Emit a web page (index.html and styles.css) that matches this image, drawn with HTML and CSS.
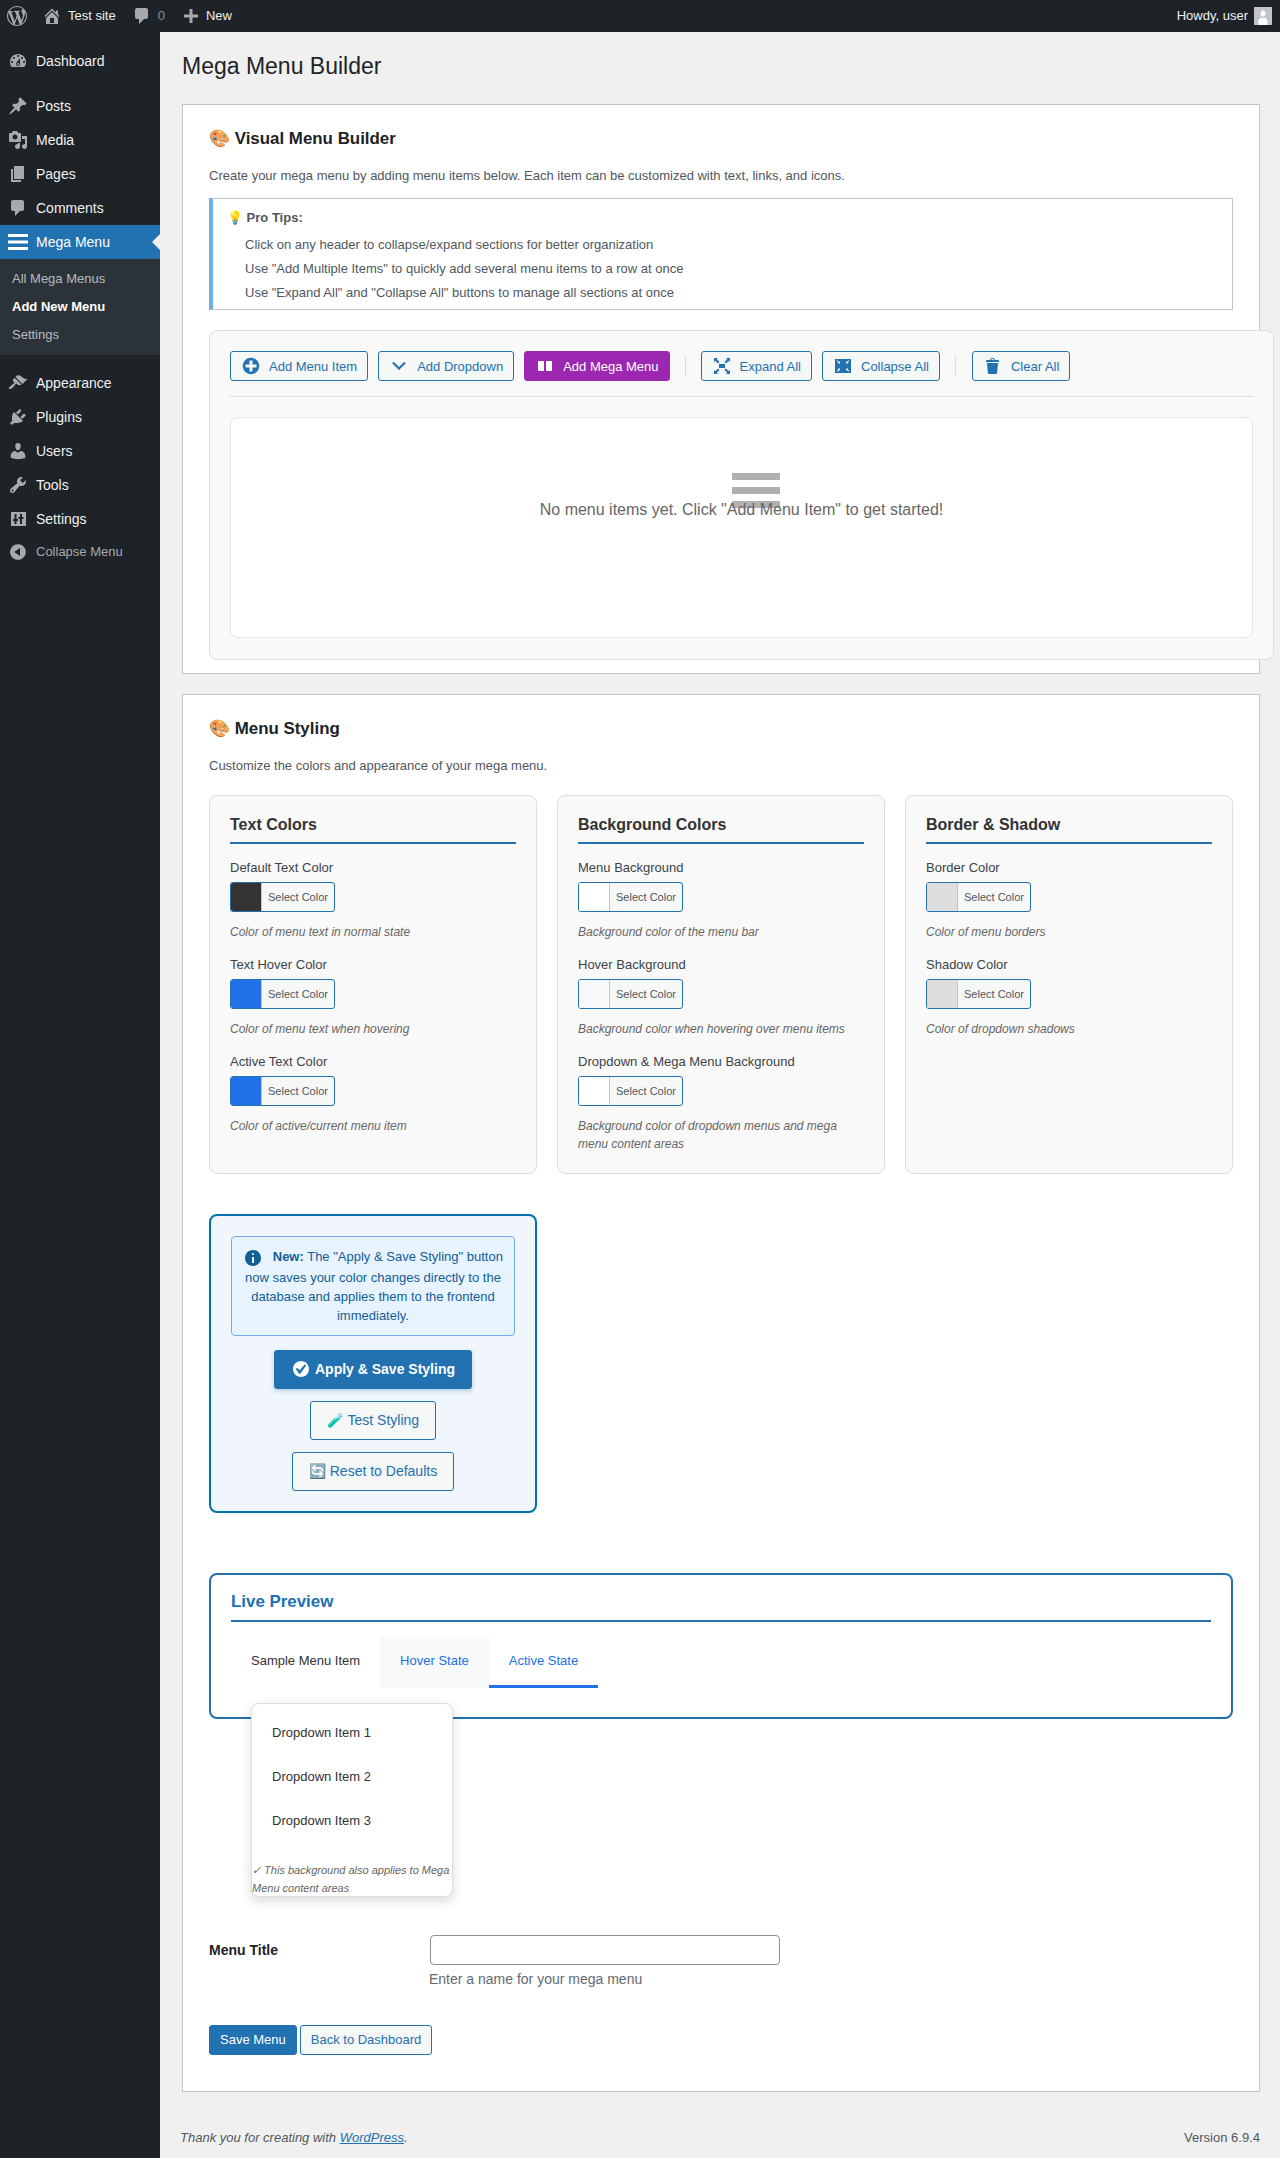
FILE: index.html
```html
<!DOCTYPE html>
<html lang="en">
<head>
    <meta charset="UTF-8">
    <meta name="viewport" content="width=device-width, initial-scale=1.0">
    <title>Mega Menu Builder</title>
    <link rel="stylesheet" href="styles.css">
</head>
<body>
    <div class="adminbar">
        <div class="adminbar-left">
            <svg class="ab-logo" viewBox="0 0 20 20"><path d="M20 10c0-5.51-4.49-10-10-10C4.48 0 0 4.49 0 10c0 5.52 4.48 10 10 10 5.51 0 10-4.48 10-10zM7.78 15.37L4.37 6.22c.55-.02 1.17-.08 1.17-.08.5-.06.44-1.13-.06-1.11 0 0-1.45.11-2.37.11-.18 0-.37 0-.58-.01C4.12 2.69 6.87 1.11 10 1.11c2.33 0 4.45.87 6.05 2.34-.68-.11-1.65.39-1.65 1.58 0 .74.45 1.36.9 2.1.35.61.55 1.36.55 2.46 0 1.49-1.4 5-1.4 5l-3.03-8.37c.54-.02.82-.17.82-.17.5-.05.44-1.25-.06-1.22 0 0-1.44.12-2.38.12-.87 0-2.33-.12-2.33-.12-.5-.03-.56 1.2-.06 1.22l.92.08 1.26 3.41zM17.41 10c.24-.64.74-1.87.43-4.25.7 1.29 1.05 2.71 1.05 4.25 0 3.29-1.73 6.24-4.4 7.78.97-2.59 1.94-5.2 2.92-7.78zM6.1 18.09C3.12 16.65 1.11 13.53 1.11 10c0-1.3.23-2.48.72-3.59C3.25 10.3 4.67 14.2 6.1 18.09zm4.03-6.63l2.58 6.98c-.86.29-1.76.45-2.71.45-.79 0-1.57-.11-2.29-.33.81-2.38 1.62-4.74 2.42-7.1z"/></svg>
            <span class="ab-item">
                <svg class="ab-icon" viewBox="0 0 20 20"><path d="M16 8.5l1.53 1.53-1.06 1.06L10 4.62l-6.47 6.47-1.06-1.06L10 2.5l4 4v-2h2v4zm-6-2.46l6 5.99V18H4v-5.97zM12 17v-5H8v5h4z"/></svg>
                Test site
            </span>
            <span class="ab-item">
                <svg class="ab-icon" viewBox="0 0 20 20"><path d="M5 2h9c1.1 0 2 .9 2 2v7c0 1.1-.9 2-2 2h-2l-5 5v-5H5c-1.1 0-2-.9-2-2V4c0-1.1.9-2 2-2z"/></svg>
                <span class="ab-count">0</span>
            </span>
            <span class="ab-item ab-new">
                <svg class="ab-icon" viewBox="0 0 20 20"><path d="M17 8.5v3h-5.5V17h-3v-5.5H3v-3h5.5V3h3v5.5z"/></svg>
                New
            </span>
        </div>
        <div class="adminbar-right">
            Howdy, user
            <svg class="ab-avatar" viewBox="0 0 18 18"><rect width="18" height="18" fill="#c3c4c7"/><path fill="#fff" d="M9 3.5c1.7 0 2.6 1.5 2.4 3.2-.2 1.6-1 3-2.4 3s-2.2-1.4-2.4-3C6.400 5 7.300 3.500 9 3.500zM4.500 18v-3.500c0-2 1.500-3.500 2.800-4L9 11.500l1.700-1c1.300.5 2.800 2 2.800 4V18z"/></svg>
        </div>
    </div>

    <div class="shell">
        <nav class="sidebar">
            <ul class="menu">
                <li class="menu-item"><svg class="menu-icon" viewBox="0 0 20 20"><path d="M3.760 16h12.480c1.100-1.370 1.760-3.110 1.760-5 0-4.420-3.580-8-8-8s-8 3.580-8 8c0 1.890.660 3.630 1.760 5zM10 4c.55 0 1 .45 1 1s-.45 1-1 1-1-.45-1-1 .45-1 1-1zM6 6c.55 0 1 .45 1 1s-.45 1-1 1-1-.45-1-1 .45-1 1-1zm8 0c.55 0 1 .45 1 1s-.45 1-1 1-1-.45-1-1 .45-1 1-1zm-5.370 5.550L12 7v6c0 1.100-.9 2-2 2s-2-.9-2-2c0-.570.240-1.080.630-1.450zM4 10c.55 0 1 .45 1 1s-.45 1-1 1-1-.45-1-1 .45-1 1-1zm12 0c.55 0 1 .45 1 1s-.45 1-1 1-1-.45-1-1 .45-1 1-1zm-5 3c0-.55-.45-1-1-1s-1 .45-1 1 .45 1 1 1 1-.45 1-1z"/></svg>Dashboard</li>
                <li class="menu-sep"></li>
                <li class="menu-item"><svg class="menu-icon" viewBox="0 0 20 20"><path d="M10.440 3.020l1.820-1.820 6.360 6.350-1.830 1.820c-1.050-.68-2.480-.57-3.410.36l-.75.75c-.92.93-1.040 2.350-.35 3.410l-1.830 1.820-2.410-2.410-2.800 2.790c-.42.42-3.380 2.710-3.800 2.290s1.860-3.390 2.280-3.810l2.790-2.790L4.100 9.360l1.830-1.820c1.050.69 2.480.57 3.400-.36l.75-.75c.93-.92 1.050-2.350.36-3.410z"/></svg>Posts</li>
                <li class="menu-item"><svg class="menu-icon" viewBox="0 0 20 20"><path d="M13 11V4c0-.55-.45-1-1-1h-1.670L9 1H5L3.670 3H2c-.55 0-1 .45-1 1v7c0 .55.45 1 1 1h10c.55 0 1-.45 1-1zM7 4.500c1.380 0 2.500 1.120 2.500 2.500S8.380 9.500 7 9.500 4.500 8.380 4.500 7 5.620 4.500 7 4.500zM14 6h5v10.500c0 1.380-1.120 2.500-2.500 2.500S14 17.880 14 16.500s1.120-2.500 2.500-2.500c.17 0 .34.02.5.05V9h-3V6zm-4 8.050V13h2v3.500c0 1.380-1.120 2.500-2.500 2.500S7 17.880 7 16.500 8.120 14 9.500 14c.17 0 .34.02.5.05z"/></svg>Media</li>
                <li class="menu-item"><svg class="menu-icon" viewBox="0 0 20 20"><path d="M6 15V2h10v13H6zm-1 1h8v2H3V5h2v11z"/></svg>Pages</li>
                <li class="menu-item"><svg class="menu-icon" viewBox="0 0 20 20"><path d="M5 2h9c1.100 0 2 .9 2 2v7c0 1.100-.9 2-2 2h-2l-5 5v-5H5c-1.100 0-2-.9-2-2V4c0-1.100.9-2 2-2z"/></svg>Comments</li>
                <li class="menu-item menu-current">
                    <svg class="menu-icon menu-icon-bars" viewBox="0 0 20 20"><path d="M0 2h20v3H0zM0 8.500h20v3H0zM0 15h20v3H0z"/></svg>Mega Menu
                </li>
                <li class="submenu">
                    <a class="submenu-link">All Mega Menus</a>
                    <a class="submenu-link submenu-current">Add New Menu</a>
                    <a class="submenu-link">Settings</a>
                </li>
                <li class="menu-sep"></li>
                <li class="menu-item"><svg class="menu-icon" viewBox="0 0 20 20"><path d="M14.480 11.060L7.410 3.990l1.500-1.500c.5-.56 2.300-.47 3.510.32 1.210.8 1.430 1.280 2.910 2.100 1.180.64 2.450 1.260 4.450.85zm-.71.71L6.700 4.700 4.930 6.470c-.39.39-.39 1.020 0 1.410l1.060 1.060c.39.39.39 1.030 0 1.420-.6.6-1.430 1.110-2.210 1.690-.35.26-.7.53-1.010.84C1.430 13.230.4 14.930 1.200 15.800c.8.87 2.570-.23 3.910-1.570.31-.31.58-.66.85-1.020.57-.78 1.080-1.610 1.690-2.210.39-.39 1.020-.39 1.410 0l1.060 1.060c.39.39 1.020.39 1.410 0z"/></svg>Appearance</li>
                <li class="menu-item"><svg class="menu-icon" viewBox="0 0 20 20"><path d="M13.110 4.360L9.870 7.600 8 5.730l3.240-3.240c.35-.34 1.050-.2 1.560.32.52.51.66 1.210.31 1.550zm-8 1.770l.91-1.120 9.010 9.010-1.190.84c-.71.71-2.630 1.160-3.820 1.160H6.140L4.900 17.260c-.59.59-1.540.59-2.120 0-.59-.58-.59-1.530 0-2.120l1.240-1.240v-3.880c0-1.130.4-3.190 1.090-3.890zm7.260 3.970l3.240-3.240c.34-.35 1.040-.21 1.550.31.52.51.66 1.210.31 1.550l-3.240 3.250z"/></svg>Plugins</li>
                <li class="menu-item"><svg class="menu-icon" viewBox="0 0 20 20"><path d="M10 9.250c-2.270 0-2.730-3.440-2.730-3.440C7 4.020 7.820 2 9.970 2c2.160 0 2.980 2.020 2.710 3.810 0 0-.41 3.440-2.680 3.440zm0 2.570L12.720 10c2.390 0 4.520 2.330 4.520 4.530v2.490s-3.650 1.130-7.240 1.130c-3.650 0-7.240-1.130-7.240-1.130v-2.490c0-2.250 1.940-4.480 4.470-4.480z"/></svg>Users</li>
                <li class="menu-item"><svg class="menu-icon" viewBox="0 0 20 20"><path d="M16.680 9.770c-1.340 1.340-3.300 1.670-4.950.99l-5.410 6.520c-.99.99-2.590.99-3.580 0s-.99-2.590 0-3.570l6.520-5.420c-.68-1.650-.35-3.610.99-4.950 1.280-1.280 3.120-1.620 4.720-1.060l-2.890 2.890 2.820 2.820 2.860-2.870c.53 1.580.18 3.390-1.080 4.650zM3.810 16.210c.4.39 1.040.39 1.430 0 .4-.4.4-1.040 0-1.430-.39-.4-1.030-.4-1.430 0-.39.39-.39 1.030 0 1.430z"/></svg>Tools</li>
                <li class="menu-item"><svg class="menu-icon" viewBox="0 0 20 20"><path d="M18 17V3H3v14h15zM14 5v3h1.500v2H14v5h-2v-5h-1.500V8H12V5h2zM8.500 5v5H10v2H8.500v3h-2v-3H5v-2h1.500V5h2z"/></svg>Settings</li>
                <li class="menu-collapse"><svg class="menu-icon" viewBox="0 0 20 20"><path d="M10 2.160c4.330 0 7.840 3.510 7.840 7.840s-3.510 7.840-7.840 7.840S2.160 14.330 2.160 10 5.710 2.160 10 2.160zm2 11.720V6.120L6.180 9.970z"/></svg>Collapse Menu</li>
            </ul>
        </nav>

        <main class="content">
            <h1 class="page-title">Mega Menu Builder</h1>

            <section class="card card-builder">
                <h2 class="card-title">🎨 Visual Menu Builder</h2>
                <p class="card-desc">Create your mega menu by adding menu items below. Each item can be customized with text, links, and icons.</p>

                <div class="tips">
                    <p class="tips-title">💡 Pro Tips:</p>
                    <p class="tips-line">Click on any header to collapse/expand sections for better organization</p>
                    <p class="tips-line">Use "Add Multiple Items" to quickly add several menu items to a row at once</p>
                    <p class="tips-line">Use "Expand All" and "Collapse All" buttons to manage all sections at once</p>
                </div>

                <div class="builder">
                    <div class="toolbar">
                        <button class="btn btn-icon"><svg viewBox="0 0 20 20"><path d="M15.800 4.200c3.200 3.210 3.200 8.390 0 11.600-3.210 3.200-8.390 3.200-11.600 0C1 12.590 1 7.410 4.200 4.200 7.410 1 12.590 1 15.800 4.200zm-4.300 11.300v-4h4v-3h-4v-4h-3v4h-4v3h4v4h3z"/></svg>Add Menu Item</button>
                        <button class="btn btn-icon"><svg viewBox="0 0 20 20"><path d="M5 6l5 5 5-5 2 1-7 7-7-7z"/></svg>Add Dropdown</button>
                        <button class="btn btn-icon btn-purple"><svg viewBox="0 0 20 20"><path d="M3 5h6v10H3zM11 5h6v10h-6z"/></svg>Add Mega Menu</button>
                        <span class="toolbar-sep"></span>
                        <button class="btn btn-icon"><svg viewBox="0 0 20 20"><path d="M7 8h6v4H7zM2 2h4L4.700 3.300l2.800 2.800-1.400 1.400-2.800-2.800L2 6zM18 2v4l-1.300-1.300-2.800 2.800-1.400-1.400 2.800-2.800L14 2zM2 18v-4l1.300 1.300 2.800-2.800 1.400 1.400-2.800 2.800L6 18zM18 18h-4l1.300-1.300-2.800-2.800 1.400-1.400 2.800 2.800L18 14z"/></svg>Expand All</button>
                        <button class="btn btn-icon"><svg viewBox="0 0 20 20"><path fill-rule="evenodd" d="M2 3h16v14H2zM4 4.500v.8l1.500 1.400L4.500 7.500H7V5.200l-.8.800L4.800 4.500zM15.200 4.500L13.800 6l-.8-.8v2.300h2.500l-1-.8L16 5.300v-.8zM7 12.500H4.500l1 .8L4 14.700v.8h.8l1.400-1.500.8.800zM13 12.500v2.300l.8-.8 1.400 1.500h.8v-.8l-1.500-1.400 1-.8z"/></svg>Collapse All</button>
                        <span class="toolbar-sep toolbar-sep-end"></span>
                        <button class="btn btn-icon"><svg viewBox="0 0 20 20"><path d="M12 4h3c.6 0 1 .4 1 1v1H3V5c0-.6.5-1 1-1h3c.2-1.100 1.300-2 2.500-2s2.300.9 2.500 2zM8 4h3c-.2-.6-.9-1-1.500-1S8.200 3.400 8 4zM4 7h11l-.9 10.100c0 .5-.5.9-1 .9H5.900c-.5 0-.9-.4-1-.9L4 7z"/></svg>Clear All</button>
                    </div>
                    <div class="empty-state">
                        <div class="empty-icon"><span></span><span></span><span></span></div>
                        <p class="empty-text">No menu items yet. Click "Add Menu Item" to get started!</p>
                    </div>
                </div>
            </section>

            <section class="card">
                <h2 class="card-title">🎨 Menu Styling</h2>
                <p class="card-desc">Customize the colors and appearance of your mega menu.</p>

                <div class="style-grid">
                    <div class="style-col">
                        <h3 class="style-title">Text Colors</h3>
                        <div class="field">
                            <label class="field-label">Default Text Color</label>
                            <button class="color-btn"><span class="swatch swatch-dark"></span><span class="color-text">Select Color</span></button>
                            <p class="field-desc">Color of menu text in normal state</p>
                        </div>
                        <div class="field">
                            <label class="field-label">Text Hover Color</label>
                            <button class="color-btn"><span class="swatch swatch-blue"></span><span class="color-text">Select Color</span></button>
                            <p class="field-desc">Color of menu text when hovering</p>
                        </div>
                        <div class="field">
                            <label class="field-label">Active Text Color</label>
                            <button class="color-btn"><span class="swatch swatch-blue"></span><span class="color-text">Select Color</span></button>
                            <p class="field-desc">Color of active/current menu item</p>
                        </div>
                    </div>
                    <div class="style-col">
                        <h3 class="style-title">Background Colors</h3>
                        <div class="field">
                            <label class="field-label">Menu Background</label>
                            <button class="color-btn"><span class="swatch swatch-white"></span><span class="color-text">Select Color</span></button>
                            <p class="field-desc">Background color of the menu bar</p>
                        </div>
                        <div class="field">
                            <label class="field-label">Hover Background</label>
                            <button class="color-btn"><span class="swatch swatch-light"></span><span class="color-text">Select Color</span></button>
                            <p class="field-desc">Background color when hovering over menu items</p>
                        </div>
                        <div class="field">
                            <label class="field-label">Dropdown &amp; Mega Menu Background</label>
                            <button class="color-btn"><span class="swatch swatch-white"></span><span class="color-text">Select Color</span></button>
                            <p class="field-desc">Background color of dropdown menus and mega menu content areas</p>
                        </div>
                    </div>
                    <div class="style-col">
                        <h3 class="style-title">Border &amp; Shadow</h3>
                        <div class="field">
                            <label class="field-label">Border Color</label>
                            <button class="color-btn"><span class="swatch swatch-grey"></span><span class="color-text">Select Color</span></button>
                            <p class="field-desc">Color of menu borders</p>
                        </div>
                        <div class="field">
                            <label class="field-label">Shadow Color</label>
                            <button class="color-btn"><span class="swatch swatch-grey"></span><span class="color-text">Select Color</span></button>
                            <p class="field-desc">Color of dropdown shadows</p>
                        </div>
                    </div>
                </div>

                <div class="apply-box">
                    <div class="notice">
                        <svg class="notice-icon" viewBox="0 0 20 20"><path d="M10 2c4.420 0 8 3.580 8 8s-3.580 8-8 8-8-3.580-8-8 3.580-8 8-8zm1 4c0-.55-.45-1-1-1s-1 .45-1 1 .45 1 1 1 1-.45 1-1zm0 9V9H9v6h2z"/></svg>
                        <strong>New:</strong> The "Apply &amp; Save Styling" button now saves your color changes directly to the database and applies them to the frontend immediately.
                    </div>
                    <button class="btn btn-big btn-primary btn-apply"><svg viewBox="0 0 20 20"><path d="M10 2c-4.420 0-8 3.580-8 8s3.580 8 8 8 8-3.580 8-8-3.580-8-8-8zm-.615 12.660h-1.340l-3.240-4.540 1.340-1.250 2.570 2.400 5.140-5.930 1.340.94-5.810 8.380z"/></svg>Apply &amp; Save Styling</button>
                    <button class="btn btn-big">🧪 Test Styling</button>
                    <button class="btn btn-big">🔄 Reset to Defaults</button>
                </div>

                <div class="preview">
                    <h4 class="preview-title">Live Preview</h4>
                    <div class="preview-menu">
                        <span class="preview-item">Sample Menu Item</span>
                        <span class="preview-item preview-hover">Hover State</span>
                        <span class="preview-item preview-active">Active State</span>
                    </div>
                    <div class="dropdown">
                        <div class="dropdown-item">Dropdown Item 1</div>
                        <div class="dropdown-item">Dropdown Item 2</div>
                        <div class="dropdown-item">Dropdown Item 3</div>
                        <p class="dropdown-note">✓ This background also applies to Mega Menu content areas</p>
                    </div>
                </div>

                <div class="form-row">
                    <label class="form-label" for="menuTitle">Menu Title</label>
                    <div class="form-field">
                        <input class="form-input" type="text" id="menuTitle">
                        <p class="form-desc">Enter a name for your mega menu</p>
                    </div>
                </div>

                <div class="form-actions">
                    <button class="btn btn-primary">Save Menu</button>
                    <button class="btn">Back to Dashboard</button>
                </div>
            </section>

            <footer class="footer">
                <span class="footer-thanks">Thank you for creating with <a class="footer-link">WordPress</a>.</span>
                <span>Version 6.9.4</span>
            </footer>
        </main>
    </div>
</body>
</html>
```

FILE: styles.css
```css
* {
    margin: 0;
    padding: 0;
    box-sizing: border-box;
}

body {
    font-family: "Liberation Sans", Arial, sans-serif;
    font-size: 13px;
    line-height: 18px;
    color: #3c434a;
    background: #f0f0f1;
}

svg {
    fill: currentColor;
    flex: none;
}

/* admin bar */
.adminbar {
    height: 32px;
    background: #1d2327;
    color: #f0f0f1;
    display: flex;
    justify-content: space-between;
    align-items: center;
}

.adminbar-left {
    display: flex;
    align-items: center;
}

.ab-logo {
    width: 20px;
    height: 20px;
    margin: 0 15px 0 7px;
    color: #a7aaad;
}

.ab-item {
    display: flex;
    align-items: center;
    gap: 6px;
    margin-right: 16px;
}

.ab-new {
    gap: 5px;
}

.ab-icon {
    width: 20px;
    height: 20px;
    color: #a7aaad;
}

.ab-count {
    color: #8c8f94;
}

.adminbar-right {
    display: flex;
    align-items: center;
    gap: 6px;
    padding-right: 8px;
}

.ab-avatar {
    width: 18px;
    height: 18px;
}

/* sidebar */
.shell {
    display: flex;
    min-height: 2126px;
}

.sidebar {
    width: 160px;
    flex: none;
    background: #1d2327;
    padding-top: 12px;
}

.menu {
    list-style: none;
}

.menu-item {
    position: relative;
    height: 34px;
    display: flex;
    align-items: center;
    gap: 8px;
    padding-left: 8px;
    font-size: 14px;
    color: #f0f0f1;
}

.menu-icon {
    width: 20px;
    height: 20px;
    color: #a7aaad;
}

.menu-sep {
    height: 11px;
}

.menu-current {
    background: #2271b1;
    color: #fff;
}

.menu-current::after {
    content: "";
    position: absolute;
    right: 0;
    top: 50%;
    margin-top: -8px;
    border: 8px solid transparent;
    border-right-color: #f0f0f1;
    border-left-width: 0;
}

.menu-icon-bars {
    color: #fff;
}

.submenu {
    background: #2c3338;
    padding: 6px 0;
}

.submenu-link {
    display: block;
    height: 28px;
    line-height: 28px;
    padding-left: 12px;
    color: rgba(240, 246, 252, 0.7);
}

.submenu-current {
    color: #fff;
    font-weight: 600;
}

.menu-collapse {
    height: 32px;
    display: flex;
    align-items: center;
    gap: 8px;
    padding-left: 8px;
    color: #a7aaad;
}

/* main content */
.content {
    flex: 1;
    min-width: 0;
    padding: 0 20px 0 22px;
}

.page-title {
    font-size: 23px;
    font-weight: 400;
    line-height: 29px;
    color: #1d2327;
    padding: 20px 0 20px;
    margin-bottom: 3px;
}

.card {
    background: #fff;
    border: 1px solid #c3c4c7;
    padding: 22px 26px 13px;
    margin-bottom: 20px;
}

.card-title {
    font-size: 16.9px;
    font-weight: 700;
    line-height: 24px;
    color: #1d2327;
    margin-bottom: 16px;
}

.card-desc {
    color: #50575e;
    margin-bottom: 13px;
}

.tips {
    height: 112px;
    border: 1px solid #c3c4c7;
    border-left: 4px solid #72aee6;
    padding: 10px 14px;
    margin-bottom: 20px;
    color: #50575e;
}

.tips-title {
    font-weight: 700;
    margin-bottom: 6px;
}

.tips-line {
    padding-left: 18px;
    height: 24px;
    line-height: 24px;
}

/* builder panel */
.builder {
    width: 1065px;
    height: 330px;
    background: #f9f9f9;
    border: 1px solid #ddd;
    border-radius: 8px;
    padding: 20px;
}

.toolbar {
    display: flex;
    align-items: center;
    gap: 10px;
    padding-bottom: 15px;
    border-bottom: 1px solid #ddd;
    margin-bottom: 20px;
}

.toolbar-sep {
    width: 1px;
    height: 20px;
    background: #ddd;
    margin: 0 5px;
}

.toolbar-sep-end {
    margin: 0 5.5px;
}

.btn {
    font-family: inherit;
    font-size: 13px;
    min-height: 30px;
    padding: 0 10px;
    color: #2271b1;
    background: #f6f7f7;
    border: 1px solid #2271b1;
    border-radius: 3px;
    cursor: pointer;
}

.btn-icon {
    display: inline-flex;
    align-items: center;
    gap: 8px;
}

.btn-icon svg {
    width: 20px;
    height: 20px;
}

.btn-purple {
    background: #9c27b0;
    border-color: #9c27b0;
    color: #fff;
}

.btn-primary {
    background: #2271b1;
    color: #fff;
}

.empty-state {
    height: 221px;
    background: #fff;
    border: 1px solid #e5e5e5;
    border-radius: 8px;
    padding-top: 55px;
    text-align: center;
}

.empty-icon {
    width: 48px;
    height: 25px;
    margin-left: calc(50% - 10px);
}

.empty-icon span {
    display: block;
    height: 7px;
    margin-bottom: 7px;
    background: #b0b0b0;
}

.empty-text {
    position: relative;
    font-size: 16px;
    line-height: 24px;
    color: #666;
}

/* styling grid */
.style-grid {
    display: grid;
    grid-template-columns: repeat(3, 1fr);
    gap: 20px;
    margin-top: 20px;
}

.style-col {
    background: #f9f9f9;
    border: 1px solid #ddd;
    border-radius: 8px;
    padding: 20px;
}

.style-title {
    font-size: 16px;
    font-weight: 700;
    line-height: 18px;
    color: #333;
    padding-bottom: 8px;
    border-bottom: 2px solid #2271b1;
    margin-bottom: 15px;
}

.field {
    margin-bottom: 15px;
}

.field:last-child {
    margin-bottom: 0;
}

.field-label {
    display: block;
    color: #3c434a;
    margin-bottom: 5px;
}

.color-btn {
    width: 105px;
    height: 30px;
    display: flex;
    align-items: stretch;
    padding: 0;
    font-family: inherit;
    background: #f6f7f7;
    border: 1px solid #2271b1;
    border-radius: 3px;
    overflow: hidden;
}

.swatch {
    width: 31px;
    border-right: 1px solid #c3c4c7;
}

.swatch-dark { background: #333; }
.swatch-blue { background: #2271e6; }
.swatch-white { background: #fff; }
.swatch-light { background: #f8f9fa; }
.swatch-grey { background: #ddd; }

.color-text {
    flex: 1;
    font-size: 11px;
    line-height: 28px;
    color: #50575e;
    text-align: center;
}

.field-desc {
    font-size: 12px;
    font-style: italic;
    line-height: 18px;
    color: #666;
    margin-top: 11px;
}

/* apply box */
.apply-box {
    width: 328px;
    display: flex;
    flex-direction: column;
    align-items: center;
    gap: 12px;
    margin-top: 40px;
    padding: 20px;
    background: #f0f6fc;
    border: 2px solid #0073aa;
    border-radius: 8px;
}

.notice {
    width: 100%;
    padding: 10px;
    background: #e7f3ff;
    border: 1px solid #72aee6;
    border-radius: 4px;
    color: #135e96;
    line-height: 19px;
    text-align: center;
    margin-bottom: 2px;
}

.notice-icon {
    width: 20px;
    height: 20px;
    vertical-align: middle;
    margin-right: 6px;
}

.btn-big {
    min-height: 39px;
    font-size: 14px;
    padding: 0 16px;
}

.btn-apply {
    display: inline-flex;
    align-items: center;
    gap: 4px;
    font-weight: 700;
    box-shadow: 0 2px 4px rgba(34, 113, 177, 0.3);
}

.btn-apply svg {
    width: 20px;
    height: 20px;
}

/* live preview */
.preview {
    position: relative;
    height: 146px;
    margin-top: 60px;
    padding: 20px;
    border: 2px solid #2271b1;
    border-radius: 8px;
}

.preview-title {
    font-size: 16.9px;
    font-weight: 700;
    line-height: 22px;
    color: #2271b1;
    padding-bottom: 7px;
    border-bottom: 2px solid #2271b1;
    margin: -4px 0 15px;
}

.preview-menu {
    display: flex;
    height: 51px;
}

.preview-item {
    padding: 0 20px;
    line-height: 48px;
    color: #333;
}

.preview-hover {
    background: #f8f9fa;
    color: #2271e6;
}

.preview-active {
    color: #2271e6;
    border-bottom: 3px solid #2271e6;
}

.dropdown {
    position: absolute;
    left: 40px;
    top: 128px;
    width: 202px;
    height: 194px;
    padding-top: 7px;
    background: #fff;
    border: 1px solid #ddd;
    border-radius: 8px;
    box-shadow: 0 4px 12px rgba(0, 0, 0, 0.15);
}

.dropdown-item {
    height: 44px;
    line-height: 44px;
    padding-left: 20px;
    color: #333;
}

.dropdown-note {
    margin-top: 18px;
    font-size: 11px;
    font-style: italic;
    line-height: 18px;
    color: #666;
}

/* form */
.form-row {
    display: flex;
    margin-top: 216px;
}

.form-label {
    width: 220px;
    flex: none;
    font-size: 14px;
    font-weight: 600;
    line-height: 30px;
    color: #1d2327;
}

.form-input {
    display: block;
    width: 350px;
    height: 30px;
    margin-left: 1px;
    background: #fff;
    border: 1px solid #8c8f94;
    border-radius: 4px;
}

.form-desc {
    font-size: 14px;
    line-height: 20px;
    color: #646970;
    margin-top: 4px;
}

.form-actions {
    display: flex;
    gap: 3px;
    margin-top: 36px;
    margin-bottom: 23px;
}

/* footer */
.footer {
    display: flex;
    justify-content: space-between;
    color: #50575e;
    padding-top: 17px;
}

.footer-thanks {
    font-style: italic;
    margin-left: -2px;
}

.footer-link {
    color: #2271b1;
    text-decoration: underline;
}
```
